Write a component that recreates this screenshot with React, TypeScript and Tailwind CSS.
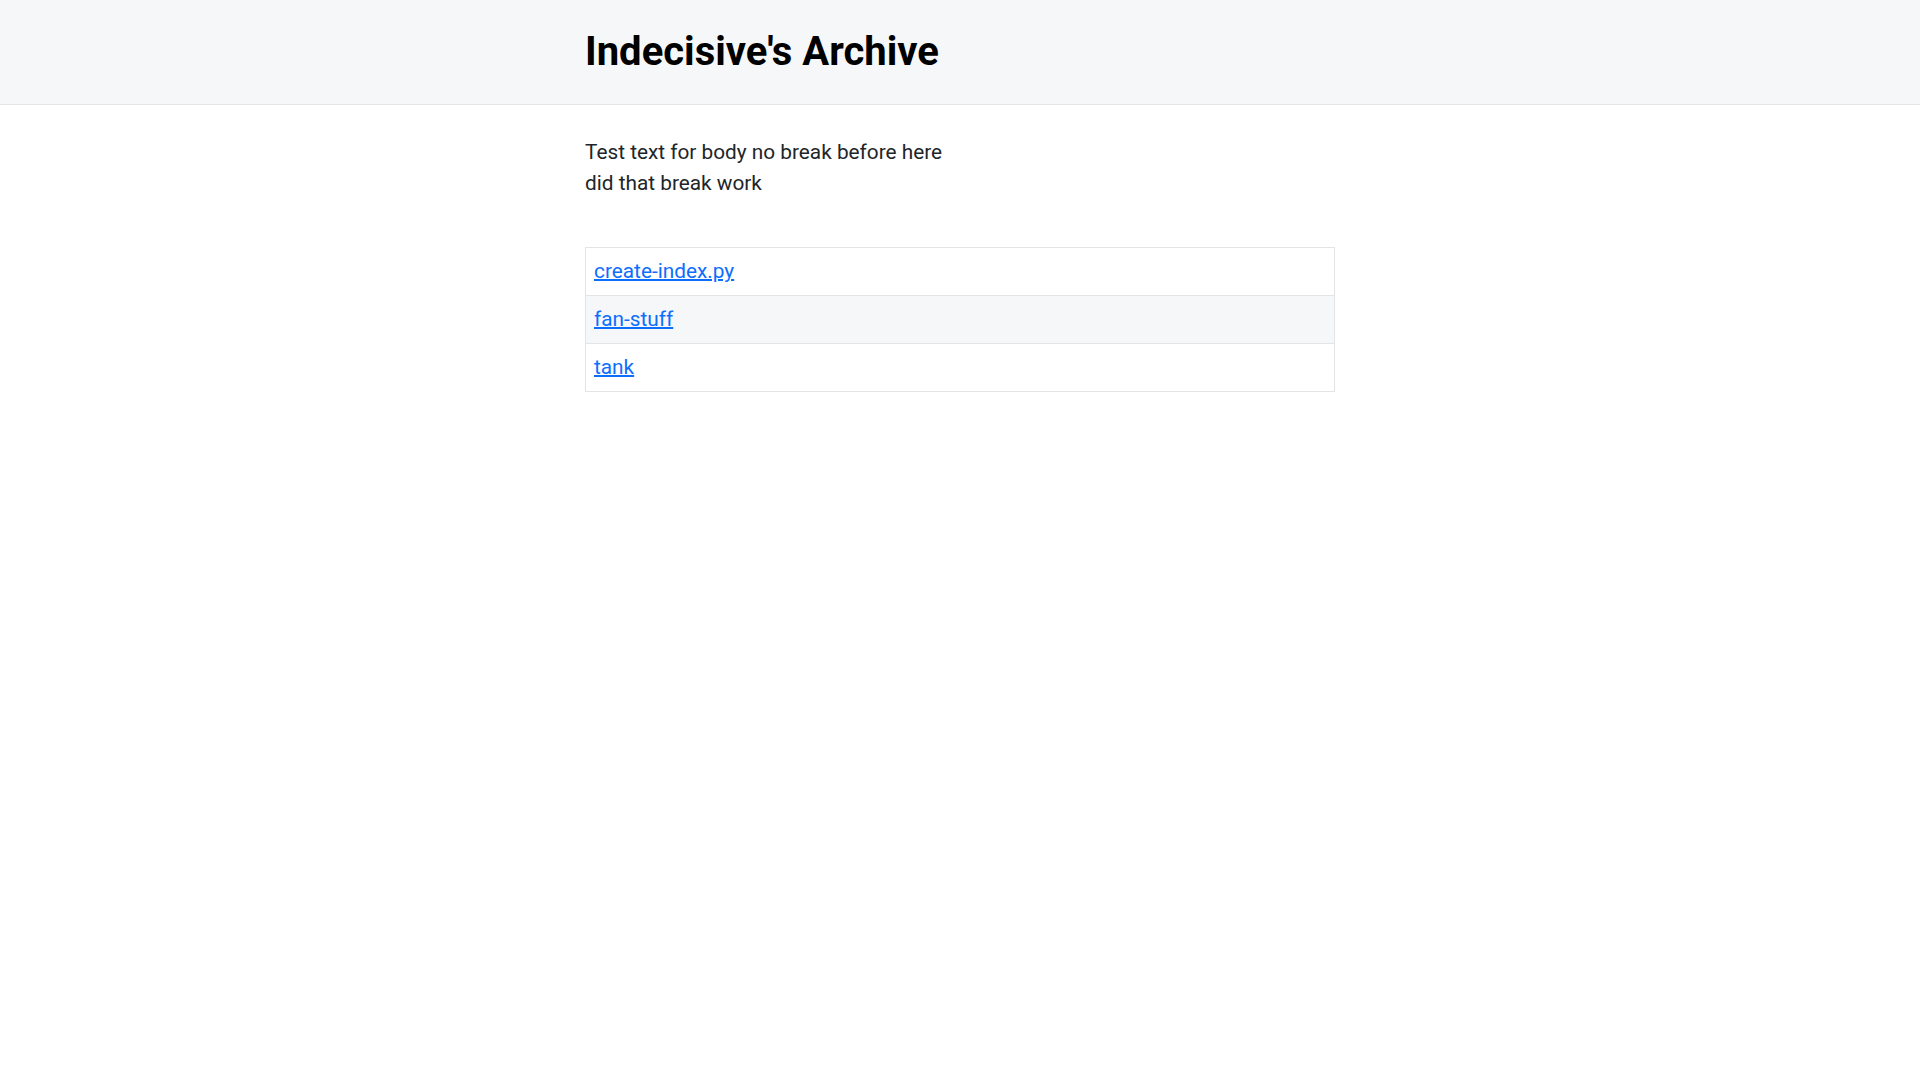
const files = ['create-index.py', 'fan-stuff', 'tank'];

export default function App() {
  return (
    <div className="min-h-screen bg-white text-[#212529] font-['Roboto','Liberation_Sans',sans-serif]">
      <header className="bg-[#f6f7f9] border-b border-[#e3e5e8]">
        <div className="max-w-[750px] mx-auto py-7">
          <h1 className="text-[2.5rem] leading-[48px] font-bold text-black">Indecisive's Archive</h1>
        </div>
      </header>

      <main className="max-w-[750px] mx-auto pt-8">
        <p className="text-[1.3rem] leading-[1.5]">
          Test text for body no break before here
          <br />
          did that break work
        </p>

        <table className="w-full mt-12 border-collapse border border-[#e3e4e6] text-[1.3rem]">
          <tbody>
            {files.map((name, i) => (
              <tr key={name} className={i % 2 === 1 ? 'bg-[#f6f7f9]' : 'bg-white'}>
                <td className="border border-[#e3e4e6] px-2 py-2 leading-[31px]">
                  <a href={'./' + name} className="text-[#0d6efd] underline decoration-2">
                    {name}
                  </a>
                </td>
              </tr>
            ))}
          </tbody>
        </table>
      </main>
    </div>
  );
}
